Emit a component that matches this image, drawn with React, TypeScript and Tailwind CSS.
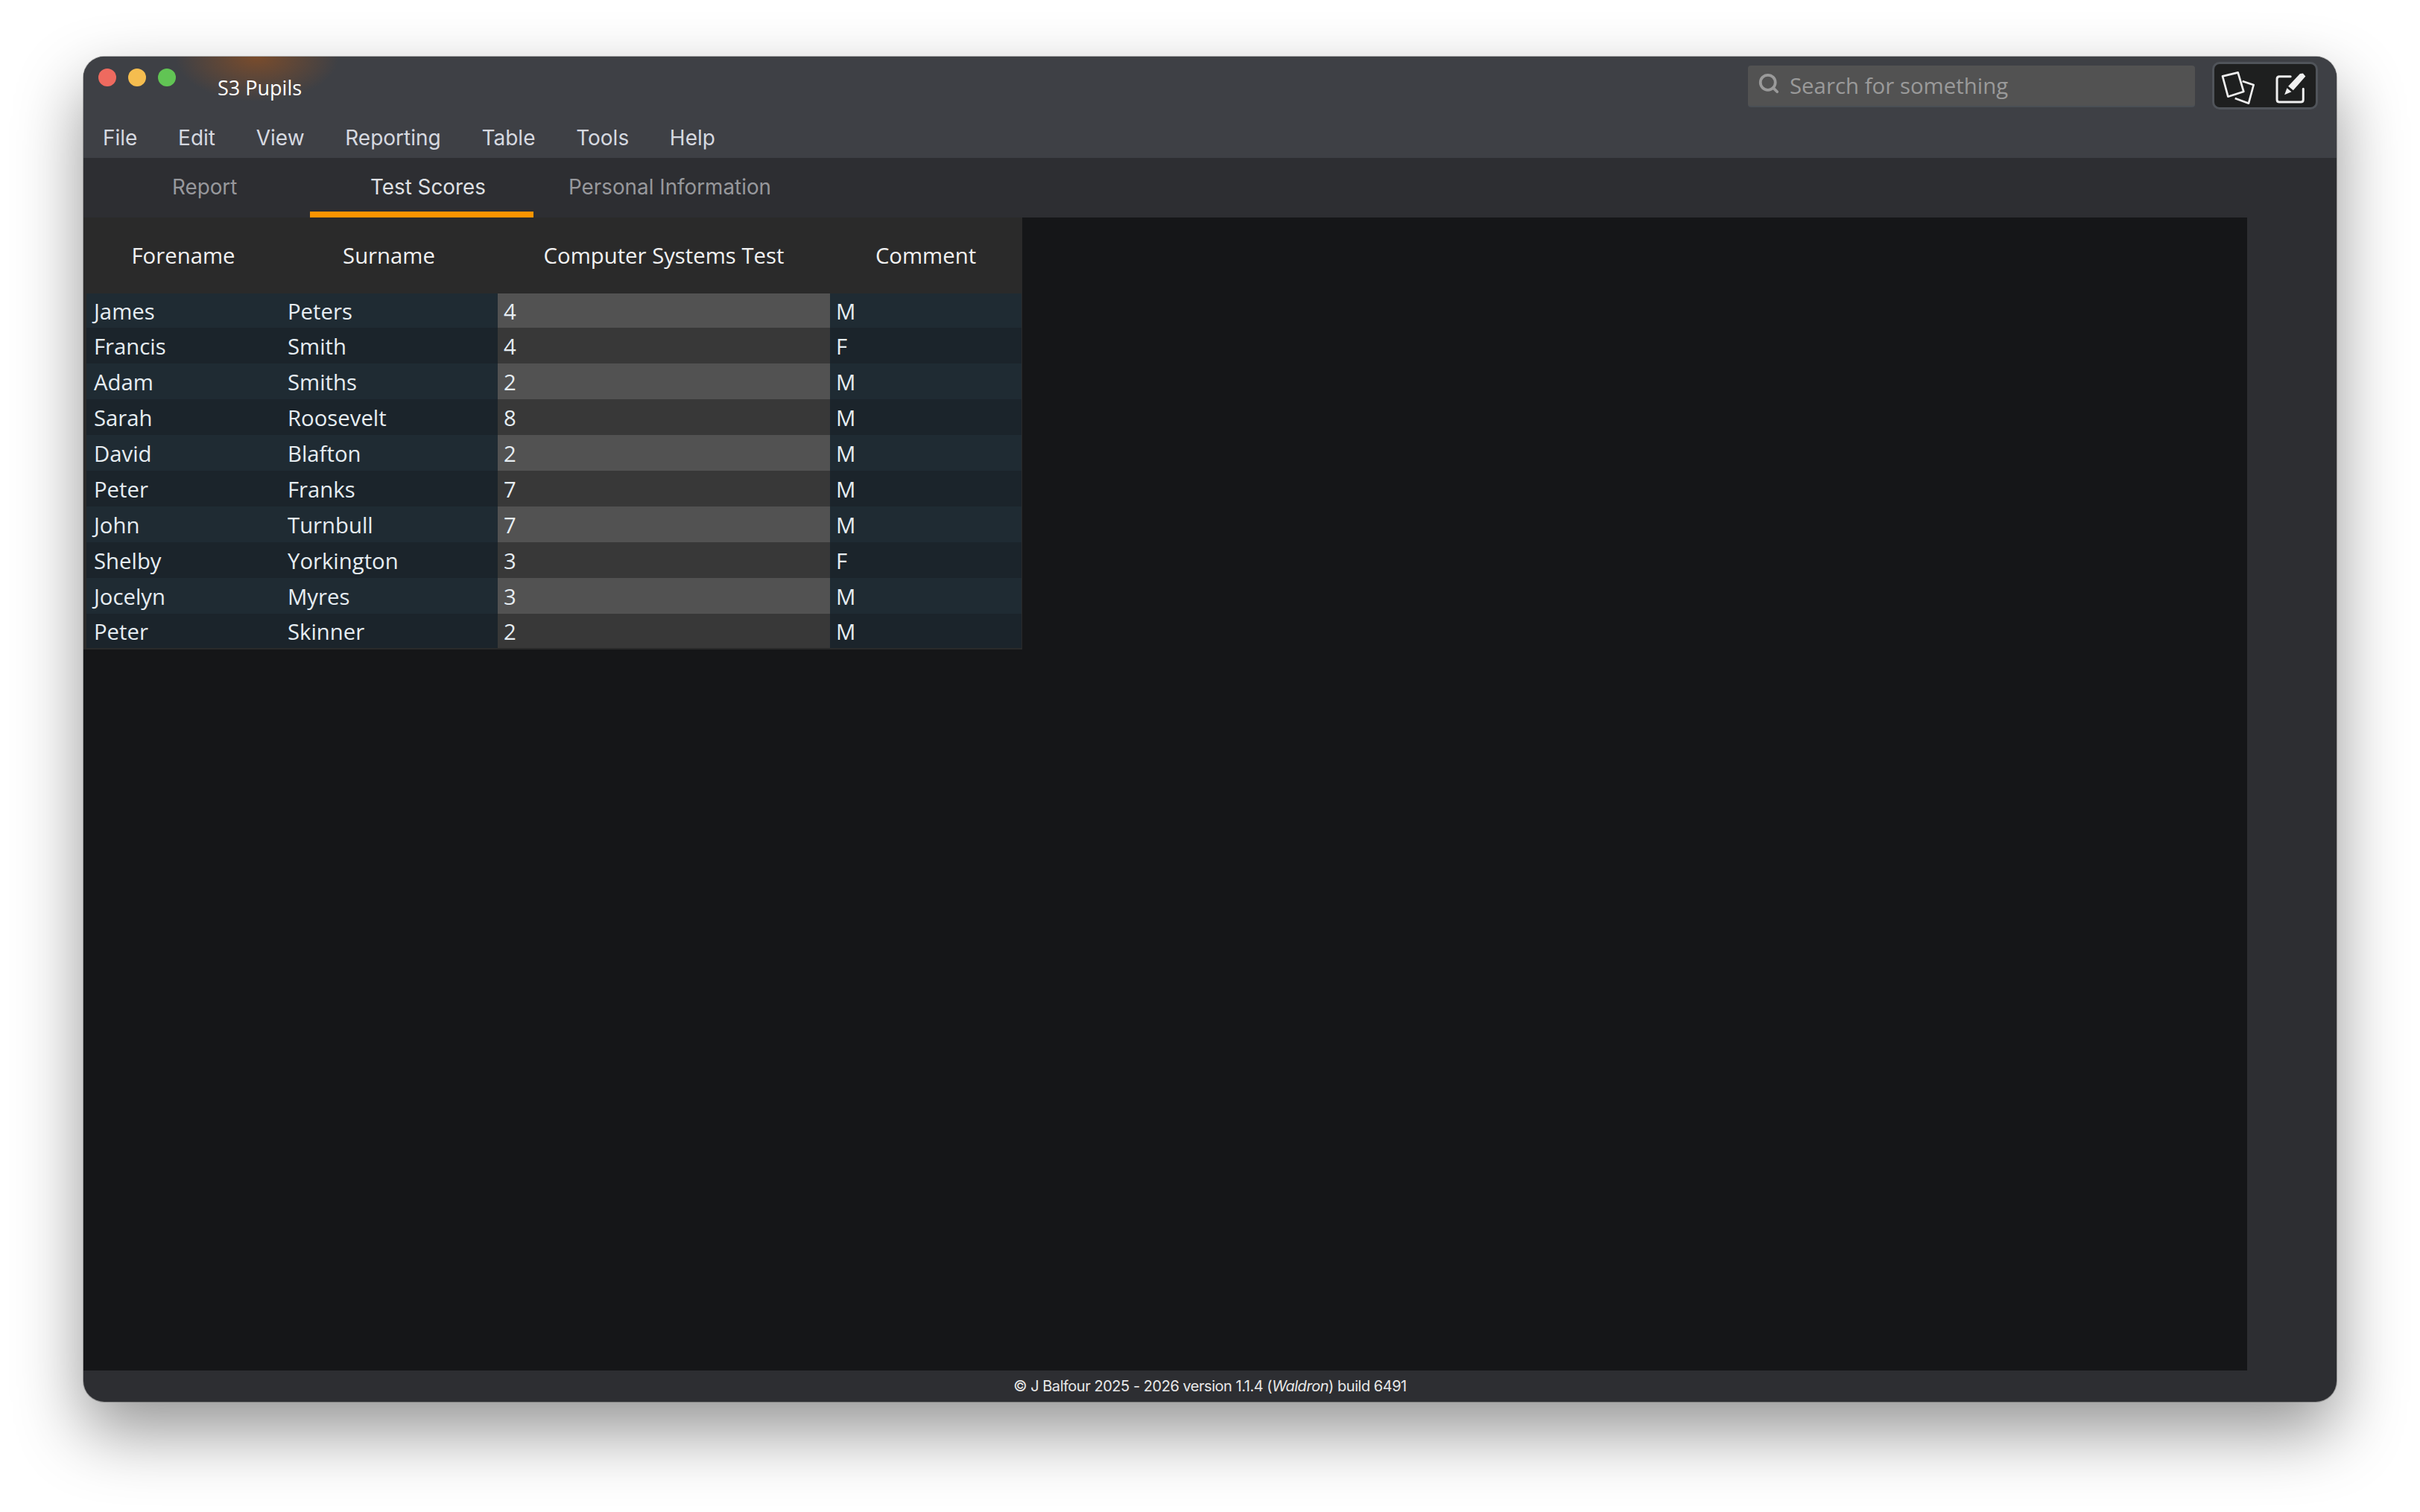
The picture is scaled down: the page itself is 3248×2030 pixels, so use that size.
import { Search } from "lucide-react";

const pupils = [
  ["James", "Peters", "4", "M"],
  ["Francis", "Smith", "4", "F"],
  ["Adam", "Smiths", "2", "M"],
  ["Sarah", "Roosevelt", "8", "M"],
  ["David", "Blafton", "2", "M"],
  ["Peter", "Franks", "7", "M"],
  ["John", "Turnbull", "7", "M"],
  ["Shelby", "Yorkington", "3", "F"],
  ["Jocelyn", "Myres", "3", "M"],
  ["Peter", "Skinner", "2", "M"],
];

const menus = ["File", "Edit", "View", "Reporting", "Table", "Tools", "Help"];

function CardsIcon() {
  return (
    <svg width="50" height="50" viewBox="55 36 150 150" fill="none" stroke="#f0f0f0" strokeWidth="8" strokeLinejoin="round">
      <path d="M70 73 L132 58 L155 135 L92 155 Z" />
      <path d="M150 93 L195 108 L175 182 L120 162" />
    </svg>
  );
}

function EditIcon() {
  return (
    <svg width="47" height="47" viewBox="270 41 140 140" fill="none" stroke="#f0f0f0" strokeWidth="9" strokeLinecap="round" strokeLinejoin="round">
      <path d="M342 73 H298 Q288 73 288 83 V165 Q288 175 298 175 H383 Q393 175 393 165 V122" />
      <path d="M380 62 L392 60 L402 72 L353 128 L333 112 Z" fill="#f0f0f0" stroke="none" />
      <path d="M328 119 L346 134 L318 146 Z" fill="#f0f0f0" stroke="none" />
    </svg>
  );
}

export default function App() {
  return (
    <div className="min-h-screen bg-white pt-[76px] px-[112px] font-['Inter',sans-serif]">
      <div className="h-[1806px] rounded-[28px] overflow-hidden flex flex-col bg-[#2d2e32] shadow-[0_40px_90px_rgba(0,0,0,0.42),0_0_0_1px_rgba(0,0,0,0.25)]">
        {/* Title bar and menus */}
        <header className="h-[136px] shrink-0 bg-[#3e4045] bg-[radial-gradient(ellipse_110px_60px_at_233px_0px,#7a4c2c,transparent)]">
          <div className="h-[84px] flex items-start pl-[20px] pr-[25px]">
            <div className="flex gap-[16px] pt-[16px]">
              <span className="w-[24px] h-[24px] rounded-full bg-[#ee6a5f]" />
              <span className="w-[24px] h-[24px] rounded-full bg-[#f5bd4f]" />
              <span className="w-[24px] h-[24px] rounded-full bg-[#61c454]" />
            </div>
            <div className="ml-[56px] pt-[26px] text-[27px] leading-[32px] text-white font-['Open_Sans',sans-serif]">S3 Pupils</div>
            <div className="ml-auto mt-[12px] w-[600px] h-[56px] rounded-[4px] bg-[#525252] border-b-2 border-[#4a4f55] flex items-center pl-[13px] text-[#9a9a9a]">
              <Search size={30} strokeWidth={3} className="-mt-[6px]" />
              <span className="ml-[13px] text-[29.4px] font-['Open_Sans',sans-serif]">Search for something</span>
            </div>
            <div className="ml-[23px] mt-[7px] w-[142px] h-[64px] rounded-[10px] bg-[#1e1f1f] border-[3px] border-[#50545a] flex items-center justify-between pl-[6px] pr-[11px]">
              <CardsIcon />
              <EditIcon />
            </div>
          </div>
          <nav className="h-[52px] pb-[2px] flex items-center gap-[54.7px] pl-[26px] text-[28px] text-[#d6d9e0]">
            {menus.map((m) => (
              <span key={m}>{m}</span>
            ))}
          </nav>
        </header>

        {/* Tabs */}
        <div className="h-[80px] shrink-0 flex text-[27.8px] text-[#97989c]">
          <div className="w-[304px] pl-[119px] pt-[19px]">Report</div>
          <div className="w-[300px] pl-[81px] pt-[19px] text-[#dfe0e3] border-b-[8px] border-[#fb9400]">Test Scores</div>
          <div className="pl-[47px] pt-[19px]">Personal Information</div>
        </div>

        <main className="flex-1 flex min-h-0">
          <div className="w-[2904px] bg-[#151618]">
            <div className="w-[1260px] bg-[#2a2a2a] pl-[4px] pr-[1px] pb-[2px]">
              <table className="w-[1255px] table-fixed border-collapse text-[#e6edf2] font-['Open_Sans',sans-serif] text-[29.3px]">
                <colgroup>
                  <col className="w-[260px]" />
                  <col className="w-[292px]" />
                  <col className="w-[446px]" />
                  <col className="w-[257px]" />
                </colgroup>
                <thead>
                  <tr className="h-[102px] text-[#f2f2f2]">
                    <th className="font-normal pt-[2px]">Forename</th>
                    <th className="font-normal pt-[2px]">Surname</th>
                    <th className="font-normal pt-[2px]">Computer Systems Test</th>
                    <th className="font-normal pt-[2px]">Comment</th>
                  </tr>
                </thead>
                <tbody>
                  {pupils.map((p, i) => {
                    const odd = i % 2 === 0;
                    const blue = odd ? "bg-[#1f2b33]" : "bg-[#1b242b]";
                    return (
                      <tr key={i} className={i === 0 || i === 9 ? "h-[46px]" : "h-[48px]"}>
                        <td className={`pl-[10px] pt-[4px] leading-none ${blue}`}>{p[0]}</td>
                        <td className={`pl-[10px] pt-[4px] leading-none ${blue}`}>{p[1]}</td>
                        <td className={`pl-[8px] pt-[4px] leading-none ${odd ? "bg-[#525252]" : "bg-[#383838]"}`}>{p[2]}</td>
                        <td className={`pl-[8px] pt-[4px] leading-none ${blue}`}>{p[3]}</td>
                      </tr>
                    );
                  })}
                </tbody>
              </table>
            </div>
          </div>
        </main>

        {/* Footer */}
        <footer className="h-[42px] shrink-0 flex items-center justify-center text-[20px] text-[#e8e8e8] tracking-[-0.47px]">
          <span>
            © J Balfour 2025 - 2026 version 1.1.4 (<em>Waldron</em>) build 6491
          </span>
        </footer>
      </div>
    </div>
  );
}
